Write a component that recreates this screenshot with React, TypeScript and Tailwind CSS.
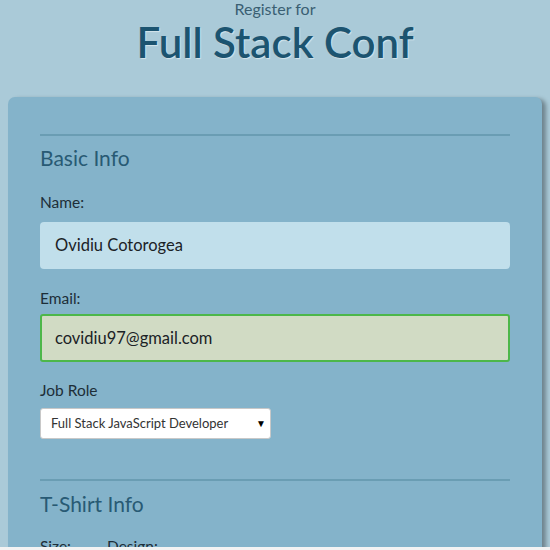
import React from "react";

export default function App() {
  return (
    <div className="w-[550px] h-[550px] overflow-hidden bg-[#aacad8] flex flex-col" style={{ fontFamily: "Lato, 'Open Sans', sans-serif" }}>
      <div className="h-[547px] overflow-hidden flex flex-col">
        <header className="flex flex-col items-center">
          <p className="text-[16px] leading-[18px] text-[#3a5f73]">Register for</p>
          <h1 className="text-[42px] leading-[46px] font-semibold text-[#1c5470] mt-[1px] [text-shadow:1px_1px_1px_rgba(255,255,255,0.5)]">Full Stack Conf</h1>
        </header>
        <div className="mt-[32px] ml-[8px] w-[534px] flex-1 rounded-[7px] bg-[#84b3ca] shadow-[4px_2px_4px_rgba(0,0,0,0.35)] px-[32px] pt-[37px]">
          <div className="border-t-2 border-[#6a9db3]" />
          <h2 className="text-[21px] leading-[24px] text-[#285a74] mt-[10px]">Basic Info</h2>
          <label className="block text-[15.5px] leading-[18px] text-[#1d2e38] mt-[23px]">Name:</label>
          <div className="mt-[11px] h-[47px] rounded-[4px] bg-[#c1dfeb] flex items-center px-[15px] text-[16.5px] text-[#1b2226]">Ovidiu Cotorogea</div>
          <label className="block text-[15.5px] leading-[18px] text-[#1d2e38] mt-[20px]">Email:</label>
          <div className="mt-[7px] h-[48px] rounded-[3px] bg-[#d1dbc4] border-2 border-[#4db74a] flex items-center px-[13px] text-[16.5px] text-[#1b2226]">covidiu97@gmail.com</div>
          <label className="block text-[15.5px] leading-[18px] text-[#1d2e38] mt-[19px]">Job Role</label>
          <div className="mt-[9px] w-[231px] h-[31px] rounded-[3px] bg-white border border-[#c8c8c8] flex items-center justify-between pl-[10px] pr-[4px] text-[13px] text-[#333]">
            <span>Full Stack JavaScript Developer</span>
            <span className="text-[10px] text-black">▼</span>
          </div>
          <div className="border-t-2 border-[#6a9db3] mt-[40px]" />
          <h2 className="text-[21px] leading-[24px] text-[#285a74] mt-[11px]">T-Shirt Info</h2>
          <div className="flex gap-[36px] text-[15.5px] leading-[18px] text-[#1d2e38] mt-[21px]">
            <span>Size:</span>
            <span>Design:</span>
          </div>
        </div>
      </div>
      <div className="h-[3px] bg-[#f3f3f3]" />
    </div>
  );
}
